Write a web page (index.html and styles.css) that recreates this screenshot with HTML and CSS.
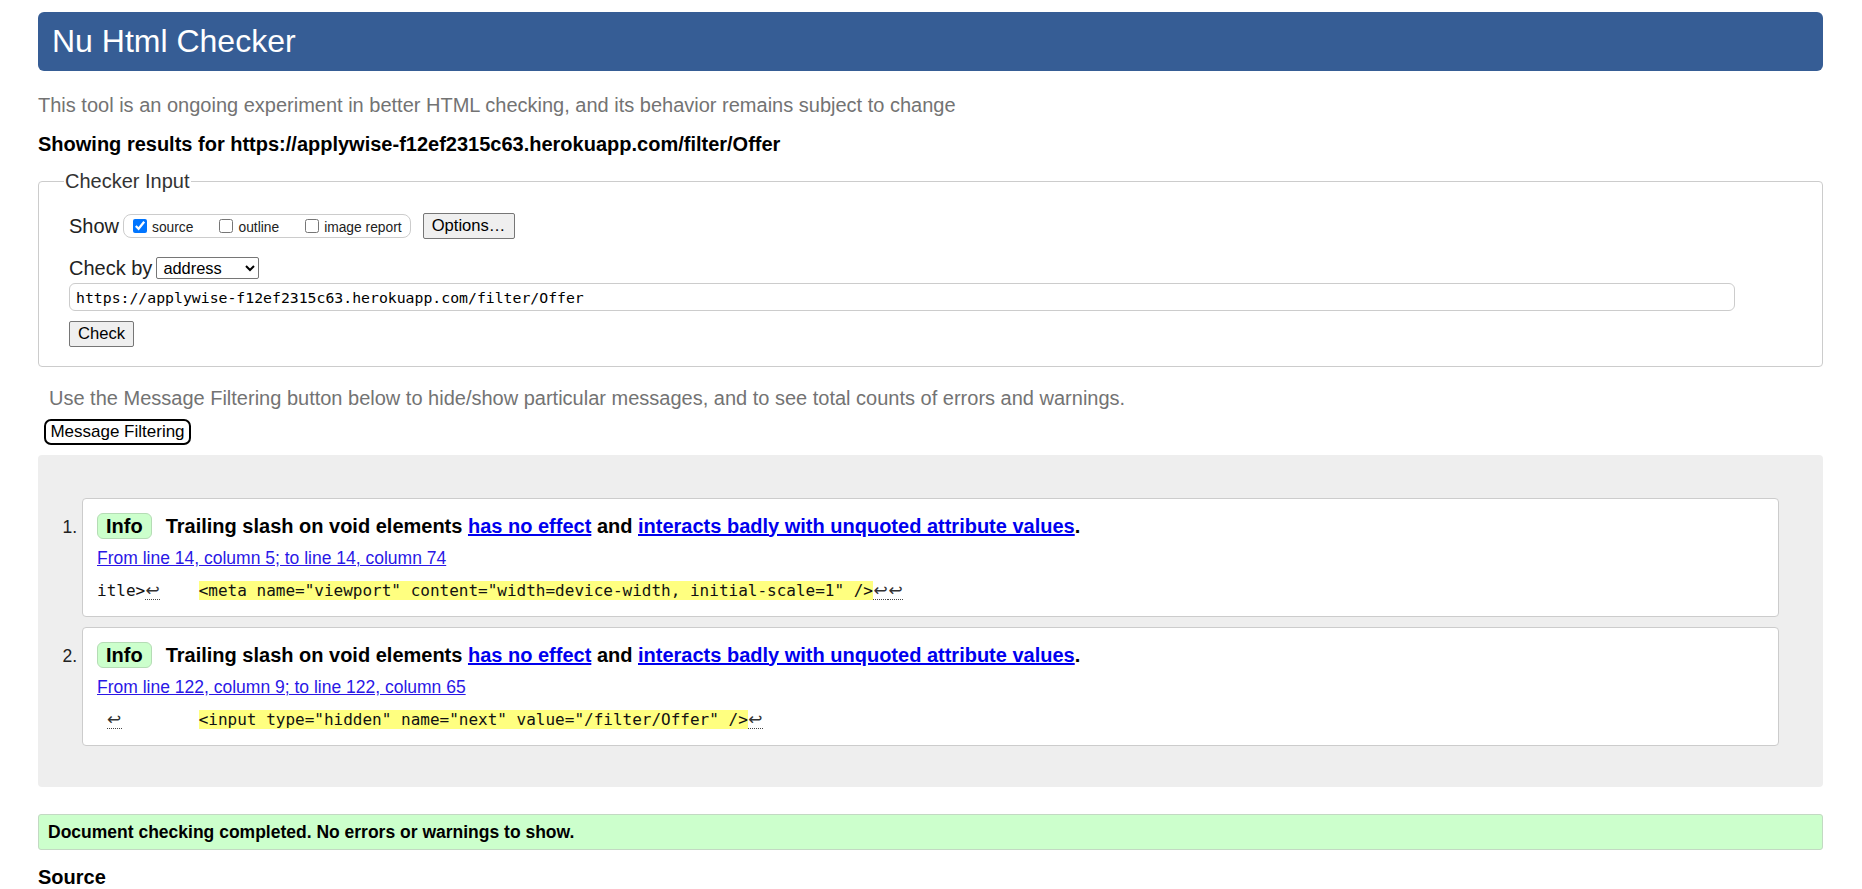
FILE: index.html
```html
<!DOCTYPE html>
<html lang="en">
<head>
<meta charset="utf-8">
<title>Nu Html Checker</title>
<link rel="stylesheet" href="styles.css">
</head>
<body>
<div class="page">
  <h1 class="banner">Nu Html Checker</h1>
  <p class="intro">This tool is an ongoing experiment in better HTML checking, and its behavior remains subject to change</p>
  <p class="results-for">Showing results for https://applywise-f12ef2315c63.herokuapp.com/filter/Offer</p>

  <fieldset class="input-box">
    <legend class="legend">Checker Input</legend>
    <div class="row show-row">
      <span class="label">Show</span>
      <span class="opts">
        <label class="opt"><input type="checkbox" class="cb" checked><span>source</span></label>
        <label class="opt"><input type="checkbox" class="cb"><span>outline</span></label>
        <label class="opt"><input type="checkbox" class="cb"><span>image report</span></label>
      </span>
      <button class="btn options-btn">Options…</button>
    </div>
    <div class="row by-row">
      <span class="label">Check by</span>
      <select class="sel"><option>address</option></select>
    </div>
    <input class="url" type="text" value="https://applywise-f12ef2315c63.herokuapp.com/filter/Offer">
    <button class="btn check-btn">Check</button>
  </fieldset>

  <p class="filter-note">Use the Message Filtering button below to hide/show particular messages, and to see total counts of errors and warnings.</p>
  <button class="filter-btn">Message Filtering</button>

  <div class="results">
    <ol class="msgs">
      <li class="msg">
        <p class="msg-title"><span class="badge">Info</span><strong>Trailing slash on void elements <a href="#">has no effect</a> and <a href="#">interacts badly with unquoted attribute values</a>.</strong></p>
        <p class="loc"><a href="#">From line 14, column 5; to line 14, column 74</a></p>
        <p class="extract"><code>itle&gt;<span class="lf">↩</span>    <b class="hl">&lt;meta name="viewport" content="width=device-width, initial-scale=1" /&gt;</b><span class="lf">↩</span><span class="lf">↩</span></code></p>
      </li>
      <li class="msg">
        <p class="msg-title"><span class="badge">Info</span><strong>Trailing slash on void elements <a href="#">has no effect</a> and <a href="#">interacts badly with unquoted attribute values</a>.</strong></p>
        <p class="loc"><a href="#">From line 122, column 9; to line 122, column 65</a></p>
        <p class="extract"><code> <span class="lf">↩</span>        <b class="hl">&lt;input type="hidden" name="next" value="/filter/Offer" /&gt;</b><span class="lf">↩</span></code></p>
      </li>
    </ol>
  </div>

  <p class="success">Document checking completed. No errors or warnings to show.</p>
  <h2 class="source">Source</h2>
</div>
</body>
</html>
```
FILE: styles.css
```css
html, body {
  margin: 0;
  padding: 0;
  background: #ffffff;
}
body {
  font-family: "Liberation Sans", Arial, sans-serif;
  color: #000;
}
.page {
  padding: 12px 39px 0 38px;
}
.banner {
  margin: 0;
  height: 59px;
  display: flex;
  align-items: center;
  padding: 0 14px;
  background: #365d95;
  color: #fff;
  font-size: 32px;
  font-weight: normal;
  border-radius: 6px;
}
.intro {
  margin: 22px 0 0;
  font-size: 20px;
  line-height: 24px;
  color: #737373;
}
.results-for {
  margin: 15px 0 0;
  font-size: 20px;
  line-height: 24px;
  font-weight: bold;
}
.input-box {
  margin: 13px 0 0;
  border: 1px solid #cccccc;
  border-radius: 4px;
  padding: 20px 0 19px 30px;
  min-width: 0;
}
.legend {
  font-size: 20px;
  line-height: 24px;
  color: #333;
  padding: 0 1px;
  margin-left: -5px;
}
.row {
  display: flex;
  align-items: center;
}
.label {
  font-size: 20px;
  line-height: 24px;
  color: #222;
}
.show-row {
  height: 26px;
}
.opts {
  display: flex;
  align-items: center;
  height: 22px;
  margin-left: 4px;
  padding: 0 8px 0 9px;
  border: 1px solid #cccccc;
  border-radius: 8px;
}
.opt {
  display: flex;
  align-items: center;
  font-size: 13.8px;
  color: #222;
  margin-left: 26px;
}
.opt:first-child {
  margin-left: 0;
}
.opt span {
  margin-left: 5px;
  padding-top: 3px;
}
.cb {
  width: 14px;
  height: 14px;
  margin: 0;
  accent-color: #0075ff;
}
.btn {
  font-family: "Liberation Sans", Arial, sans-serif;
  font-size: 16.6px;
  background: #efefef;
  border: 1px solid #767676;
  border-radius: 2px;
  color: #000;
  padding: 0;
}
.options-btn {
  margin-left: 12px;
  width: 92px;
  height: 26px;
}
.by-row {
  margin-top: 17px;
  height: 24px;
}
.sel {
  margin-left: 4px;
  width: 103px;
  height: 22px;
  font-family: "Liberation Sans", Arial, sans-serif;
  font-size: 16.4px;
  border: 1px solid #767676;
  border-radius: 2px;
  background: #fff;
  color: #000;
  padding: 0 2px;
}
.url {
  display: block;
  box-sizing: border-box;
  margin-top: 3px;
  width: 1666px;
  height: 28px;
  padding: 0 6px;
  border: 1px solid #cccccc;
  border-radius: 6px;
  font-family: "DejaVu Sans Mono", "Liberation Mono", monospace;
  font-size: 14.8px;
  color: #000;
}
.check-btn {
  display: block;
  margin-top: 10px;
  width: 65px;
  height: 26px;
}
.filter-note {
  margin: 19px 0 0;
  padding-left: 11px;
  font-size: 20px;
  line-height: 24px;
  color: #737373;
}
.filter-btn {
  display: block;
  margin: 9px 0 0 6px;
  width: 147px;
  height: 26px;
  padding: 0;
  font-family: "Liberation Sans", Arial, sans-serif;
  font-size: 17px;
  color: #000;
  background: #fff;
  border: 2px solid #000;
  border-radius: 7px;
}
.results {
  margin-top: 10px;
  background: #eeeeee;
  border-radius: 4px;
  padding: 43px 44px 41px 44px;
}
.msgs {
  margin: 0;
  padding: 0;
  list-style: decimal outside;
}
.msg {
  background: #fff;
  border: 1px solid #cccccc;
  border-radius: 4px;
  padding: 14px 14px 15px 14px;
  margin-bottom: 10px;
}
.msg:last-child {
  margin-bottom: 0;
}
.msg::marker {
  font-size: 17.5px;
  color: #222;
}
.msg-title {
  margin: 0;
  display: flex;
  align-items: center;
  height: 26px;
  font-size: 20px;
}
.msg-title strong {
  font-weight: bold;
}
.badge {
  box-sizing: border-box;
  height: 26px;
  display: inline-flex;
  align-items: center;
  padding: 0 8px;
  margin-right: 14px;
  background: #ccffcc;
  border: 1px solid #b5dcb5;
  border-radius: 6px;
  font-weight: bold;
}
.msg-title a {
  color: #0000ee;
  text-decoration: underline;
}
.loc {
  margin: 9px 0 0;
  font-size: 17.5px;
  line-height: 20px;
}
.loc a {
  color: #2a17e6;
  text-decoration: underline;
}
.extract {
  margin: 13px 0 0;
  line-height: 20px;
  white-space: pre;
}
.extract code {
  font-family: "DejaVu Sans Mono", "Liberation Mono", monospace;
  font-size: 16px;
  color: #111;
}
.hl {
  font-weight: normal;
  background: #ffff80;
}
.lf {
  display: inline-block;
  width: 15px;
  line-height: 18px;
  text-align: center;
  font-family: "DejaVu Sans", sans-serif;
  font-size: 17px;
  color: #333;
  border-bottom: 1px dotted #444;
}
.success {
  margin: 27px 0 0;
  box-sizing: border-box;
  height: 36px;
  display: flex;
  align-items: center;
  padding-left: 9px;
  background: #ccffcc;
  border: 1px solid #c3d9c3;
  border-radius: 3px;
  font-weight: bold;
  font-size: 17.5px;
}
.source {
  margin: 15px 0 0;
  font-size: 20px;
  line-height: 24px;
  font-weight: bold;
}
```
